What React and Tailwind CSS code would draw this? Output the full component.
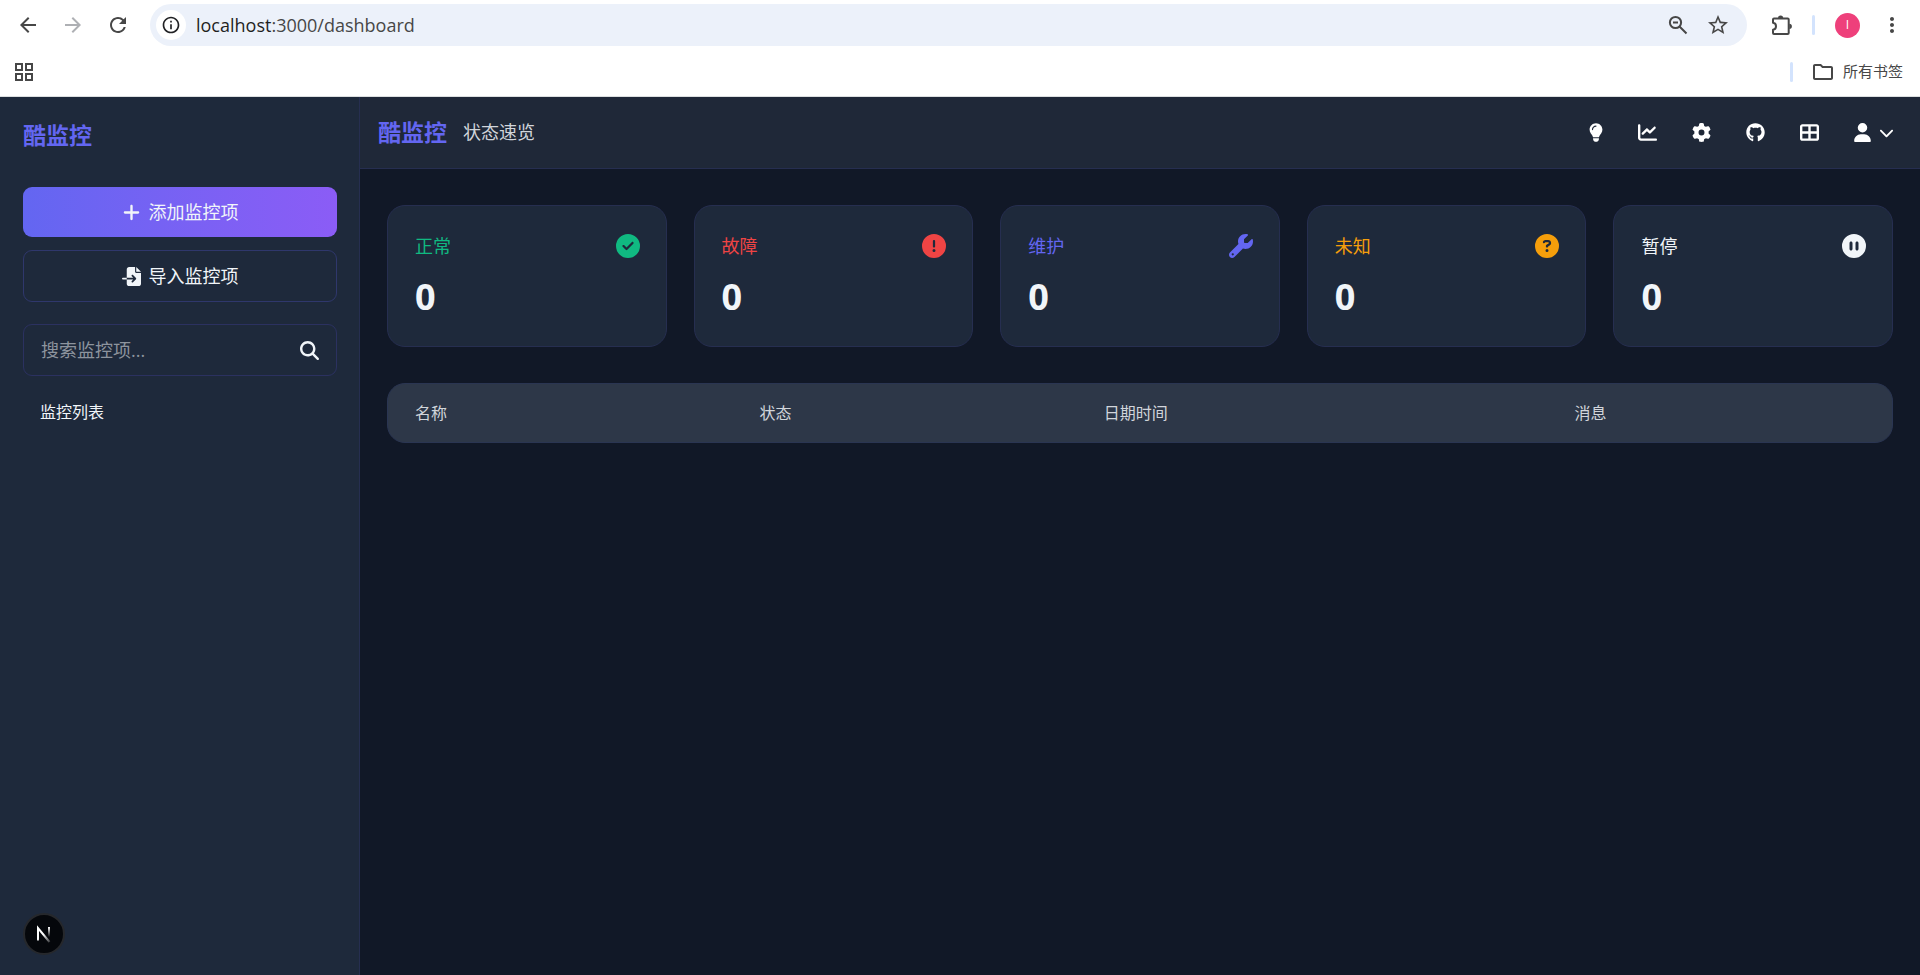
// src/App.jsx
import { useState } from 'react';
import {
  FaChartLine,
  FaChevronDown,
  FaCircleCheck,
  FaCircleExclamation,
  FaCirclePause,
  FaCircleQuestion,
  FaFileImport,
  FaGear,
  FaGithub,
  FaLightbulb,
  FaMagnifyingGlass,
  FaPlus,
  FaTableCellsLarge,
  FaUser,
  FaWrench
} from 'react-icons/fa6';
import {
  MdArrowBack,
  MdArrowForward,
  MdInfoOutline,
  MdMoreVert,
  MdOutlineFolder,
  MdRefresh,
  MdStarOutline
} from 'react-icons/md';

const stats = [
  { label: '正常', value: 0, color: 'text-[#10b981]', Icon: FaCircleCheck },
  { label: '故障', value: 0, color: 'text-[#ef4444]', Icon: FaCircleExclamation },
  { label: '维护', value: 0, color: 'text-[#6366f1]', Icon: FaWrench },
  { label: '未知', value: 0, color: 'text-[#f59e0b]', Icon: FaCircleQuestion },
  { label: '暂停', value: 0, color: 'text-slate-100', Icon: FaCirclePause }
];

const ZoomOutIcon = () => (
  <svg className="size-6" viewBox="0 0 24 24" fill="none" stroke="currentColor" strokeWidth="2">
    <circle cx="9.500" cy="9.500" r="5.600" />
    <path d="M13.500 13.500L20.500 20.500M7 9.500H12" />
  </svg>
);

const PuzzleIcon = () => (
  <svg className="size-6" viewBox="0 0 24 24" fill="none" stroke="currentColor" strokeWidth="2">
    <path
      d="M4 5.500H17.700Q18.700 5.500 18.700 6.500V20Q18.700 21 17.700 21H4Q3 21 3 20V16.800C7 16.300 7 10.300 3 9.800V6.500Q3 5.500 4 5.500Z"
      strokeLinejoin="round"
    />
    <path d="M8 5a2.600 2.600 0 0 1 5.200 0zM19.300 10.700a2.600 2.600 0 0 1 0 5.200z" fill="currentColor" stroke="none" />
  </svg>
);

const BrowserBar = () => (
  <div className="bg-white border-b border-[#dcdfe0] text-[#474747]">
    <div className="h-12 flex items-center pt-[2px] px-4">
      <div className="flex items-center gap-[21px]">
        <button type="button" aria-label="后退"><MdArrowBack className="size-6" /></button>
        <button type="button" aria-label="前进" className="text-[#aeb0b4]"><MdArrowForward className="size-6" /></button>
        <button type="button" aria-label="刷新"><MdRefresh className="size-6" /></button>
      </div>
      <div className="flex-1 h-[42px] ml-5 flex items-center rounded-full bg-[#ecf1fa] pl-[6px] pr-[17px]">
        <span className="size-[30px] rounded-full bg-white flex items-center justify-center text-[#202124]">
          <MdInfoOutline className="size-5" />
        </span>
        <p className="flex-1 ml-[10px] text-lg text-[#474747]">
          <span className="text-[#1f1f1f]">localhost</span>:3000/dashboard
        </p>
        <div className="flex items-center gap-4">
          <button type="button" aria-label="缩放"><ZoomOutIcon /></button>
          <button type="button" aria-label="收藏"><MdStarOutline className="size-6" /></button>
        </div>
      </div>
      <div className="flex items-center ml-[23px]">
        <button type="button" aria-label="扩展程序"><PuzzleIcon /></button>
        <span className="w-[3px] h-5 ml-[18px] rounded-full bg-[#d3e3fd]" />
        <span className="size-[25px] ml-5 rounded-full bg-[#ee407b] text-white text-xs flex items-center justify-center">I</span>
        <button type="button" aria-label="更多" className="ml-5"><MdMoreVert className="size-6" /></button>
      </div>
    </div>
    <div className="h-12 flex items-center justify-between pl-[15px] pr-[17px]">
      <button type="button" aria-label="应用" className="grid grid-cols-2 gap-[2px]">
        <span className="size-2 border-2" />
        <span className="size-2 border-2" />
        <span className="size-2 border-2" />
        <span className="size-2 border-2" />
      </button>
      <div className="flex items-center">
        <span className="w-[3px] h-5 rounded-full bg-[#d3e3fd]" />
        <button type="button" className="ml-[18px] flex items-center gap-2 text-[15px]">
          <MdOutlineFolder className="size-6" />
          所有书签
        </button>
      </div>
    </div>
  </div>
);

const Sidebar = () => {
  const [keyword, setKeyword] = useState('');

  return (
    <aside className="w-[360px] shrink-0 flex flex-col border-r border-[#262e50] bg-[#1e293b] pl-[23px] pr-[22px] pt-[22px] pb-5">
      <h1 className="text-[23px] leading-8 font-bold text-[#6366f1]">酷监控</h1>
      <button
        type="button"
        className="mt-9 h-[50px] flex items-center justify-center gap-2 rounded-[9px] bg-linear-to-r from-[#6366f1] to-[#8b5cf6]"
      >
        <FaPlus className="size-[19px]" />
        添加监控项
      </button>
      <button
        type="button"
        className="mt-[13px] h-[52px] flex items-center justify-center gap-2 rounded-[9px] border border-[#2f376c]"
      >
        <FaFileImport className="size-[19px]" />
        导入监控项
      </button>
      <label className="mt-[22px] h-[52px] flex items-center rounded-[9px] border border-[#2b3160] px-[17px]">
        <input
          type="text"
          aria-label="搜索监控项"
          value={keyword}
          onChange={(e) => setKeyword(e.target.value)}
          placeholder="搜索监控项..."
          className="flex-1 min-w-0 bg-transparent outline-none placeholder:text-[#8d949e]"
        />
        <FaMagnifyingGlass className="size-[19px]" />
      </label>
      <h2 className="mt-6 px-[17px] text-base">监控列表</h2>
      <button
        type="button"
        aria-label="Next.js"
        className="mt-auto size-[42px] rounded-full border-2 border-[#26282c] bg-[#05070b] flex items-center justify-center"
      >
        <svg className="size-[18px]" viewBox="0 0 18 18" fill="none" strokeWidth="2">
          <defs>
            <linearGradient id="fadeStem" x1="0" y1="2" x2="0" y2="12" gradientUnits="userSpaceOnUse">
              <stop stopColor="#fff" />
              <stop offset="1" stopColor="#fff" stopOpacity="0" />
            </linearGradient>
            <linearGradient id="fadeDiagonal" x1="9" y1="9" x2="15" y2="17" gradientUnits="userSpaceOnUse">
              <stop stopColor="#fff" />
              <stop offset="1" stopColor="#fff" stopOpacity="0.2" />
            </linearGradient>
          </defs>
          <path d="M3 15.500V3L14.500 17" stroke="url(#fadeDiagonal)" />
          <path d="M14 2V12" stroke="url(#fadeStem)" />
        </svg>
      </button>
    </aside>
  );
};

const Header = () => (
  <header className="h-[72px] flex items-center justify-between border-b border-[#262e50] bg-[#1f2838] pl-[18px] pr-[26px]">
    <div className="flex items-center gap-4">
      <span className="text-[23px] font-bold text-[#6366f1]">酷监控</span>
      <span className="text-[#d1d5db]">状态速览</span>
    </div>
    <nav className="flex items-center gap-[35px] text-[19px] text-white">
      <button type="button" aria-label="主题"><FaLightbulb className="w-[14px]" /></button>
      <button type="button" aria-label="图表"><FaChartLine /></button>
      <button type="button" aria-label="设置"><FaGear /></button>
      <a href="https://github.com" aria-label="GitHub"><FaGithub /></a>
      <button type="button" aria-label="状态页"><FaTableCellsLarge /></button>
      <button type="button" aria-label="用户" className="flex items-center gap-2">
        <FaUser className="w-[17px]" />
        <FaChevronDown className="size-[15px]" />
      </button>
    </nav>
  </header>
);

const StatCard = ({ label, value, color, Icon }) => (
  <div className="h-[142px] rounded-[18px] border border-[#262e50] bg-[#1e293b] pl-[27px] pr-[26px] pt-[26px]">
    <div className={`flex items-center justify-between ${color}`}>
      <span className="leading-7">{label}</span>
      <Icon className="size-6" />
    </div>
    <p className="mt-[13px] text-[36px] leading-[48px] font-bold">{value}</p>
  </div>
);

const MonitorTable = () => (
  <div className="overflow-hidden rounded-[18px] border border-[#2a3552] bg-[#2d3748]">
    <table className="w-full table-fixed text-left text-base text-[#d1d5db]">
      <thead>
        <tr className="h-[58px]">
          <th className="w-[22.9%] pl-[27px] font-normal">名称</th>
          <th className="w-[22.9%] pl-[27px] font-normal">状态</th>
          <th className="w-[31.3%] pl-[27px] font-normal">日期时间</th>
          <th className="pl-[27px] font-normal">消息</th>
        </tr>
      </thead>
    </table>
  </div>
);

export default function App() {
  return (
    <div className="min-h-screen flex flex-col text-lg text-slate-100 font-['Open_Sans','Noto_Sans_CJK_SC',sans-serif]">
      <BrowserBar />
      <div className="flex-1 flex bg-[#111827]">
        <Sidebar />
        <main className="flex-1 min-w-0">
          <Header />
          <div className="flex flex-col gap-9 px-[27px] py-9">
            <section className="grid grid-cols-5 gap-[27px]">
              {stats.map((stat) => (
                <StatCard key={stat.label} {...stat} />
              ))}
            </section>
            <MonitorTable />
          </div>
        </main>
      </div>
    </div>
  );
}
